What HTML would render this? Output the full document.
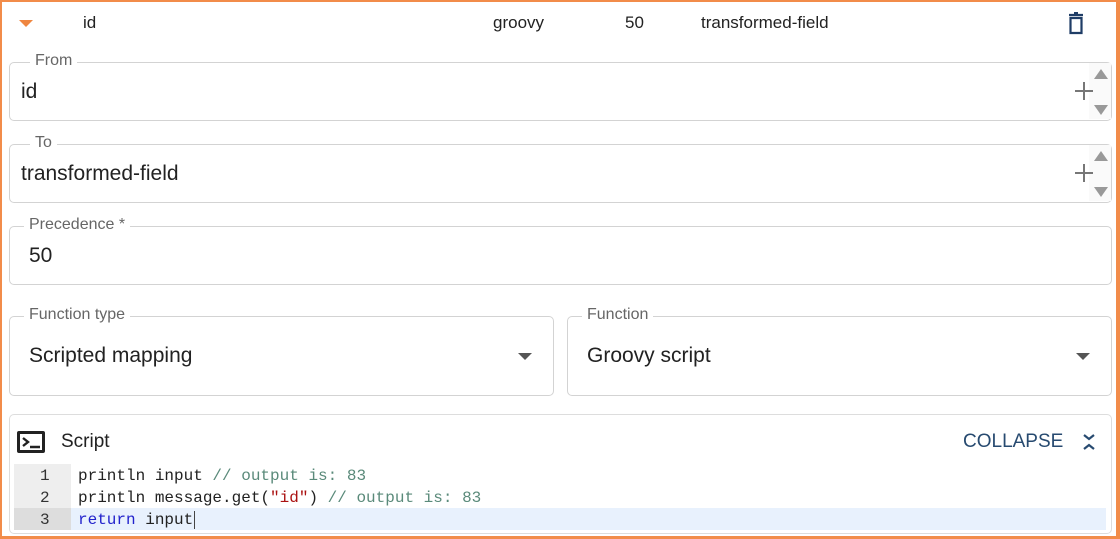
<!DOCTYPE html>
<html><head><style>
*{box-sizing:border-box;margin:0;padding:0}
body{width:1120px;height:539px;background:#fff;font-family:"Liberation Sans",sans-serif;position:relative;overflow:hidden;color:#222}
.outer{position:absolute;left:0;top:0;width:1120px;height:539px;border:2px solid #f28c4a;border-right-width:4px;border-bottom-width:3px}
.a{position:absolute}
.box{position:absolute;border:1px solid #d3d3d3;border-radius:5px}
.lbl{position:absolute;background:#fff;padding:0 5px;font-size:16px;color:#666;top:-11px}
.val{position:absolute;font-size:21px;color:#222}
.spin{position:absolute;right:0;top:0;width:22px;height:56px;background:#fafafa}
.up{position:absolute;left:5px;width:0;height:0;border-left:7px solid transparent;border-right:7px solid transparent}
.code{position:absolute;font-family:"Liberation Mono",monospace;font-size:16px;left:78px;color:#222}
.ln{position:absolute;font-family:"Liberation Mono",monospace;font-size:16px;left:40px;color:#333}
</style></head><body>
<div class="outer"></div>
<div class="a" style="left:19px;top:20px;width:0;height:0;border-left:7px solid transparent;border-right:7px solid transparent;border-top:7px solid #ef8640"></div>
<div class="a" style="left:83px;top:13px;font-size:17px">id</div>
<div class="a" style="left:493px;top:13px;font-size:17px">groovy</div>
<div class="a" style="left:625px;top:13px;font-size:17px">50</div>
<div class="a" style="left:701px;top:13px;font-size:17px">transformed-field</div>
<svg class="a" style="left:1066px;top:12px" width="20" height="24" viewBox="0 0 20 24"><path d="M3 3h14M8 1h4M4.5 6h11v15h-11z" fill="none" stroke="#1f3d66" stroke-width="2.2"/></svg>

<div class="box" style="left:9px;top:62px;width:1103px;height:59px"><span class="lbl" style="left:20px">From</span><span class="val" style="left:11px;top:17px">id</span>
<div class="spin"><div class="up" style="top:6px;border-bottom:10px solid #999"></div><div class="up" style="top:42px;border-top:10px solid #999"></div></div>
<svg class="a" style="left:1064px;top:18px" width="20" height="20"><path d="M10 1v18M1 10h18" stroke="#777" stroke-width="2"/></svg></div>

<div class="box" style="left:9px;top:144px;width:1103px;height:59px"><span class="lbl" style="left:20px">To</span><span class="val" style="left:11px;top:17px">transformed-field</span>
<div class="spin"><div class="up" style="top:6px;border-bottom:10px solid #999"></div><div class="up" style="top:42px;border-top:10px solid #999"></div></div>
<svg class="a" style="left:1064px;top:18px" width="20" height="20"><path d="M10 1v18M1 10h18" stroke="#777" stroke-width="2"/></svg></div>

<div class="box" style="left:9px;top:226px;width:1103px;height:59px"><span class="lbl" style="left:14px">Precedence *</span><span class="val" style="left:19px;top:17px">50</span></div>

<div class="box" style="left:9px;top:316px;width:545px;height:80px"><span class="lbl" style="left:14px">Function type</span><span class="val" style="left:19px;top:27px">Scripted mapping</span>
<div class="a" style="left:508px;top:36px;border-left:7px solid transparent;border-right:7px solid transparent;border-top:7px solid #555"></div></div>
<div class="box" style="left:567px;top:316px;width:545px;height:80px"><span class="lbl" style="left:14px">Function</span><span class="val" style="left:19px;top:27px">Groovy script</span>
<div class="a" style="left:508px;top:36px;border-left:7px solid transparent;border-right:7px solid transparent;border-top:7px solid #555"></div></div>

<div class="box" style="left:9px;top:414px;width:1103px;height:120px;border-color:#ddd"></div>
<div class="a" style="left:17px;top:431px;width:28px;height:22px;border:3px solid #222;border-radius:2px"></div>
<svg class="a" style="left:22px;top:436px" width="20" height="14"><path d="M1 2l5 4-5 4M8 11h10" stroke="#222" stroke-width="2.4" fill="none"/></svg>
<div class="a" style="left:61px;top:431px;font-size:19px">Script</div>
<div class="a" style="left:963px;top:431px;font-size:19px;color:#274a70">COLLAPSE</div>
<svg class="a" style="left:1082px;top:433px" width="14" height="18"><path d="M2 2l5 4 5-4M2 16l5-4 5 4" stroke="#274a70" stroke-width="2.2" fill="none"/></svg>

<div class="a" style="left:14px;top:464px;width:57px;height:66px;background:#eee"></div>
<div class="a" style="left:14px;top:508px;width:57px;height:22px;background:#ddd"></div>
<div class="a" style="left:71px;top:508px;width:1035px;height:22px;background:#e8f1fd"></div>
<div class="ln" style="top:467px">1</div><div class="ln" style="top:489px">2</div><div class="ln" style="top:511px">3</div>
<div class="code" style="top:467px">println input <span style="color:#5a8a7a">// output is: 83</span></div>
<div class="code" style="top:489px">println message.get(<span style="color:#a11">"id"</span>) <span style="color:#5a8a7a">// output is: 83</span></div>
<div class="code" style="top:511px"><span style="color:#22c">return</span> input<span style="border-left:1px solid #444;margin-left:1px"></span></div>
</body></html>
